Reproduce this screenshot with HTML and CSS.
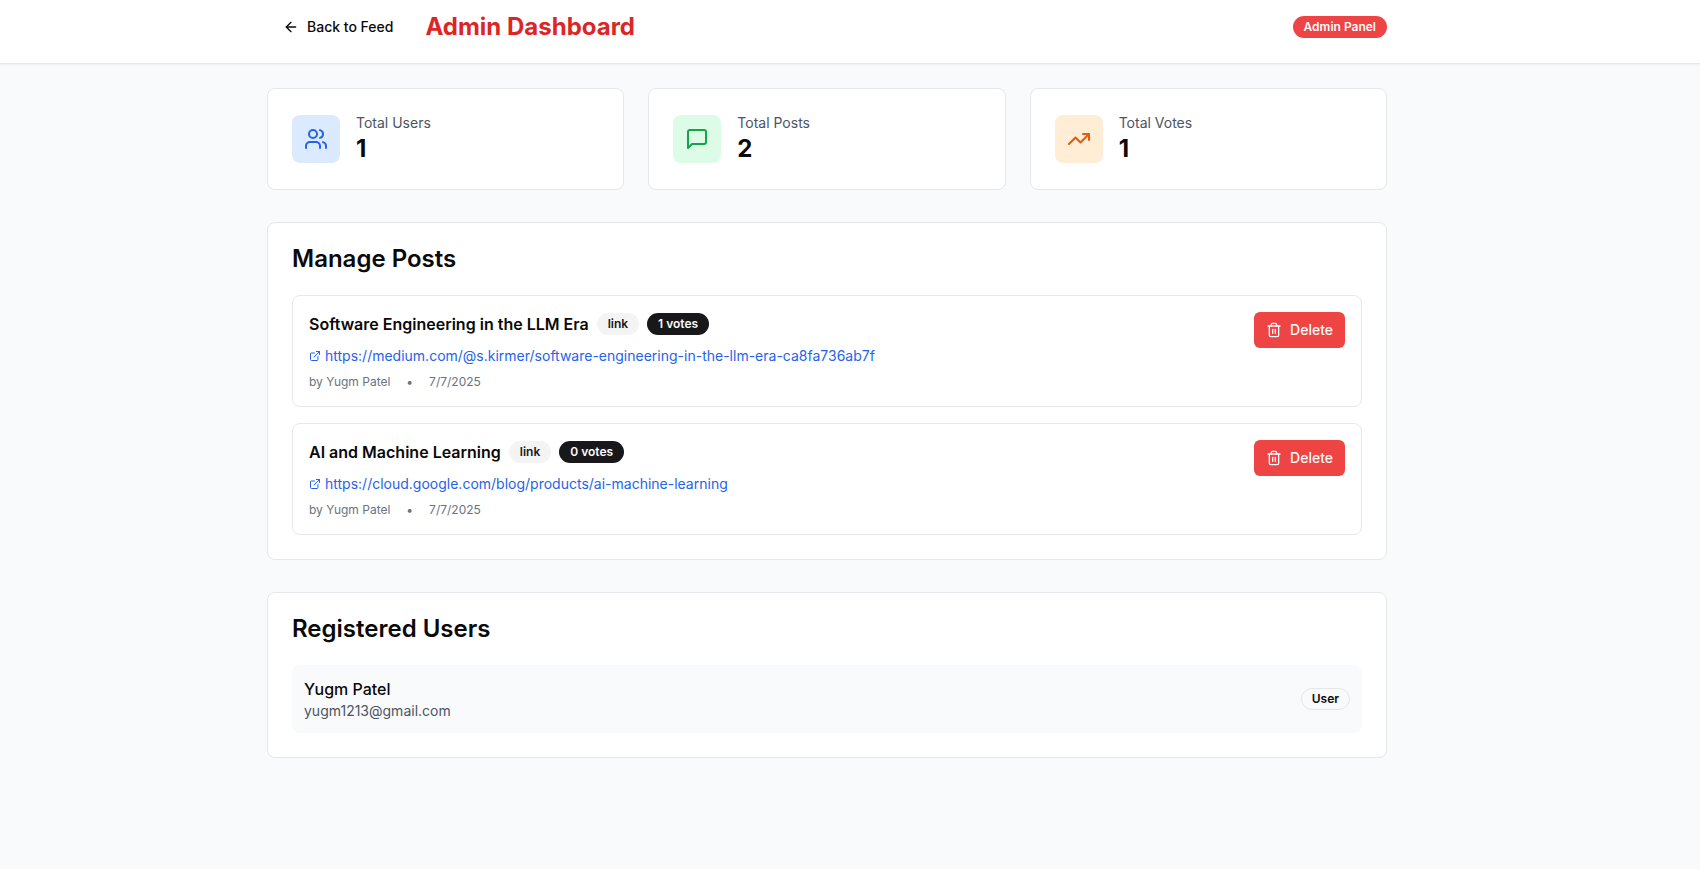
FILE: index.html
```html
<!DOCTYPE html>
<html lang="en">
<head>
<meta charset="utf-8">
<meta name="viewport" content="width=device-width, initial-scale=1">
<title>Admin Dashboard</title>
<link rel="stylesheet" href="styles.css">
</head>
<body>
<header class="site-header">
  <div class="container header-row">
    <div class="header-left">
      <a class="back-link" href="#">
        <svg class="icon icon-md" viewBox="0 0 24 24" aria-hidden="true"><path d="m12 19-7-7 7-7"/><path d="M19 12H5"/></svg>
        Back to Feed
      </a>
      <h1 class="page-title">Admin Dashboard</h1>
    </div>
    <span class="badge badge-red">Admin Panel</span>
  </div>
</header>
<main class="container content">
  <section class="stats" aria-label="Statistics">
    <div class="card stat">
      <div class="stat-icon blue">
        <svg class="icon icon-lg" viewBox="0 0 24 24" aria-hidden="true"><path d="M16 21v-2a4 4 0 0 0-4-4H6a4 4 0 0 0-4 4v2"/><circle cx="9" cy="7" r="4"/><path d="M22 21v-2a4 4 0 0 0-3-3.87"/><path d="M16 3.13a4 4 0 0 1 0 7.75"/></svg>
      </div>
      <div>
        <p class="stat-label">Total Users</p>
        <p class="stat-value">1</p>
      </div>
    </div>
    <div class="card stat">
      <div class="stat-icon green">
        <svg class="icon icon-lg" viewBox="0 0 24 24" aria-hidden="true"><path d="M21 15a2 2 0 0 1-2 2H7l-4 4V5a2 2 0 0 1 2-2h14a2 2 0 0 1 2 2z"/></svg>
      </div>
      <div>
        <p class="stat-label">Total Posts</p>
        <p class="stat-value">2</p>
      </div>
    </div>
    <div class="card stat">
      <div class="stat-icon orange">
        <svg class="icon icon-lg" viewBox="0 0 24 24" aria-hidden="true"><polyline points="22 7 13.5 15.5 8.5 10.5 2 17"/><polyline points="16 7 22 7 22 13"/></svg>
      </div>
      <div>
        <p class="stat-label">Total Votes</p>
        <p class="stat-value">1</p>
      </div>
    </div>
  </section>

  <section class="card panel">
    <h2 class="panel-title">Manage Posts</h2>
    <div class="posts">
      <article class="post">
        <div class="post-body">
          <div class="post-head">
            <h3 class="post-title">Software Engineering in the LLM Era</h3>
            <span class="badge badge-gray">link</span>
            <span class="badge badge-dark">1 votes</span>
          </div>
          <a class="post-link" href="#">
            <svg class="icon icon-sm" viewBox="0 0 24 24" aria-hidden="true"><path d="M15 3h6v6"/><path d="M10 14 21 3"/><path d="M18 13v6a2 2 0 0 1-2 2H5a2 2 0 0 1-2-2V8a2 2 0 0 1 2-2h6"/></svg>
            https://medium.com/@s.kirmer/software-engineering-in-the-llm-era-ca8fa736ab7f
          </a>
          <div class="post-meta"><span>by Yugm Patel</span><span>•</span><span>7/7/2025</span></div>
        </div>
        <button class="delete-button" type="button">
          <svg class="icon icon-md" viewBox="0 0 24 24" aria-hidden="true"><path d="M3 6h18"/><path d="M19 6v14c0 1-1 2-2 2H7c-1 0-2-1-2-2V6"/><path d="M8 6V4c0-1 1-2 2-2h4c1 0 2 1 2 2v2"/><path d="M10 11v6"/><path d="M14 11v6"/></svg>
          Delete
        </button>
      </article>
      <article class="post">
        <div class="post-body">
          <div class="post-head">
            <h3 class="post-title">AI and Machine Learning</h3>
            <span class="badge badge-gray">link</span>
            <span class="badge badge-dark">0 votes</span>
          </div>
          <a class="post-link" href="#">
            <svg class="icon icon-sm" viewBox="0 0 24 24" aria-hidden="true"><path d="M15 3h6v6"/><path d="M10 14 21 3"/><path d="M18 13v6a2 2 0 0 1-2 2H5a2 2 0 0 1-2-2V8a2 2 0 0 1 2-2h6"/></svg>
            https://cloud.google.com/blog/products/ai-machine-learning
          </a>
          <div class="post-meta"><span>by Yugm Patel</span><span>•</span><span>7/7/2025</span></div>
        </div>
        <button class="delete-button" type="button">
          <svg class="icon icon-md" viewBox="0 0 24 24" aria-hidden="true"><path d="M3 6h18"/><path d="M19 6v14c0 1-1 2-2 2H7c-1 0-2-1-2-2V6"/><path d="M8 6V4c0-1 1-2 2-2h4c1 0 2 1 2 2v2"/><path d="M10 11v6"/><path d="M14 11v6"/></svg>
          Delete
        </button>
      </article>
    </div>
  </section>

  <section class="card panel">
    <h2 class="panel-title">Registered Users</h2>
    <div class="user">
      <div>
        <p class="user-name">Yugm Patel</p>
        <p class="user-email">yugm1213@gmail.com</p>
      </div>
      <span class="badge badge-outline">User</span>
    </div>
  </section>
</main>
</body>
</html>
```
FILE: styles.css
```css
* {
  box-sizing: border-box;
  margin: 0;
}

body {
  min-height: 100vh;
  padding-right: 46px;
  background: #f9fafb;
  color: #0a0a0a;
  font-family: Inter, "Liberation Sans", sans-serif;
  font-size: 16px;
  line-height: 24px;
}

.container {
  max-width: 1152px;
  margin: 0 auto;
  padding: 0 16px;
}

.site-header {
  margin-right: -46px;
  padding: 9px 46px 18px 0;
  background: #fff;
  border-bottom: 1px solid #e5e7eb;
  box-shadow: 0 1px 2px rgb(0 0 0 / 5%);
}

.header-row,
.header-left {
  display: flex;
  align-items: center;
}

.header-row {
  justify-content: space-between;
}

.header-left {
  gap: 16px;
}

.back-link {
  display: flex;
  align-items: center;
  gap: 8px;
  height: 36px;
  padding: 0 16px;
  color: #0a0a0a;
  font-size: 14px;
  font-weight: 500;
  line-height: 20px;
  text-decoration: none;
}

.page-title {
  color: #dc2626;
  font-size: 24px;
  font-weight: 700;
  line-height: 32px;
}

.icon {
  flex: none;
  fill: none;
  stroke: currentColor;
  stroke-width: 2;
  stroke-linecap: round;
  stroke-linejoin: round;
}

.icon-sm {
  width: 12px;
  height: 12px;
}

.icon-md {
  width: 16px;
  height: 16px;
}

.icon-lg {
  width: 24px;
  height: 24px;
}

.badge {
  padding: 2px 10px;
  border: 1px solid transparent;
  border-radius: 11px;
  font-size: 12px;
  font-weight: 600;
  line-height: 16px;
  white-space: nowrap;
}

.badge-red {
  background: #ef4444;
  color: #fafafa;
}

.badge-gray {
  background: #f4f4f5;
  color: #18181b;
}

.badge-dark {
  background: #18181b;
  color: #fafafa;
}

.badge-outline {
  border-color: #e5e7eb;
}

.content {
  display: flex;
  flex-direction: column;
  gap: 32px;
  padding-top: 24px;
  padding-bottom: 24px;
}

.card {
  padding: 24px;
  background: #fff;
  border: 1px solid #e5e7eb;
  border-radius: 8px;
}

.stats {
  display: grid;
  grid-template-columns: repeat(3, 1fr);
  gap: 24px;
}

.stat {
  display: flex;
  align-items: center;
  gap: 16px;
}

.stat-icon {
  padding: 12px;
  border-radius: 8px;
}

.stat-icon .icon {
  display: block;
}

.blue {
  background: #dbeafe;
  color: #2563eb;
}

.green {
  background: #dcfce7;
  color: #16a34a;
}

.orange {
  background: #ffedd5;
  color: #ea580c;
}

.stat-label,
.user-email {
  color: #4b5563;
  font-size: 14px;
  line-height: 20px;
}

.stat-value {
  font-size: 24px;
  font-weight: 700;
  line-height: 32px;
}

.panel-title {
  margin-bottom: 24px;
  font-size: 24px;
  font-weight: 600;
  line-height: 24px;
}

.posts {
  display: grid;
  gap: 16px;
}

.post {
  display: flex;
  align-items: flex-start;
  justify-content: space-between;
  gap: 16px;
  padding: 16px;
  border: 1px solid #e5e7eb;
  border-radius: 8px;
}

.post-head {
  display: flex;
  align-items: center;
  gap: 8px;
  margin-bottom: 10px;
}

.post-title {
  font-size: 16px;
  font-weight: 600;
  line-height: 24px;
}

.post-link {
  display: flex;
  align-items: center;
  gap: 4px;
  margin-bottom: 8px;
  color: #2563eb;
  font-size: 14px;
  line-height: 20px;
  text-decoration: none;
}

.post-meta {
  display: flex;
  gap: 16px;
  color: #6b7280;
  font-size: 12px;
  line-height: 16px;
}

.delete-button {
  display: flex;
  align-items: center;
  gap: 8px;
  height: 36px;
  padding: 0 12px;
  border: 0;
  border-radius: 6px;
  background: #ef4444;
  color: #fafafa;
  font: 500 14px/20px Inter, "Liberation Sans", sans-serif;
}

.user {
  display: flex;
  align-items: center;
  justify-content: space-between;
  padding: 12px;
  background: #f9fafb;
  border-radius: 8px;
}

.user-name {
  font-weight: 500;
}
```
